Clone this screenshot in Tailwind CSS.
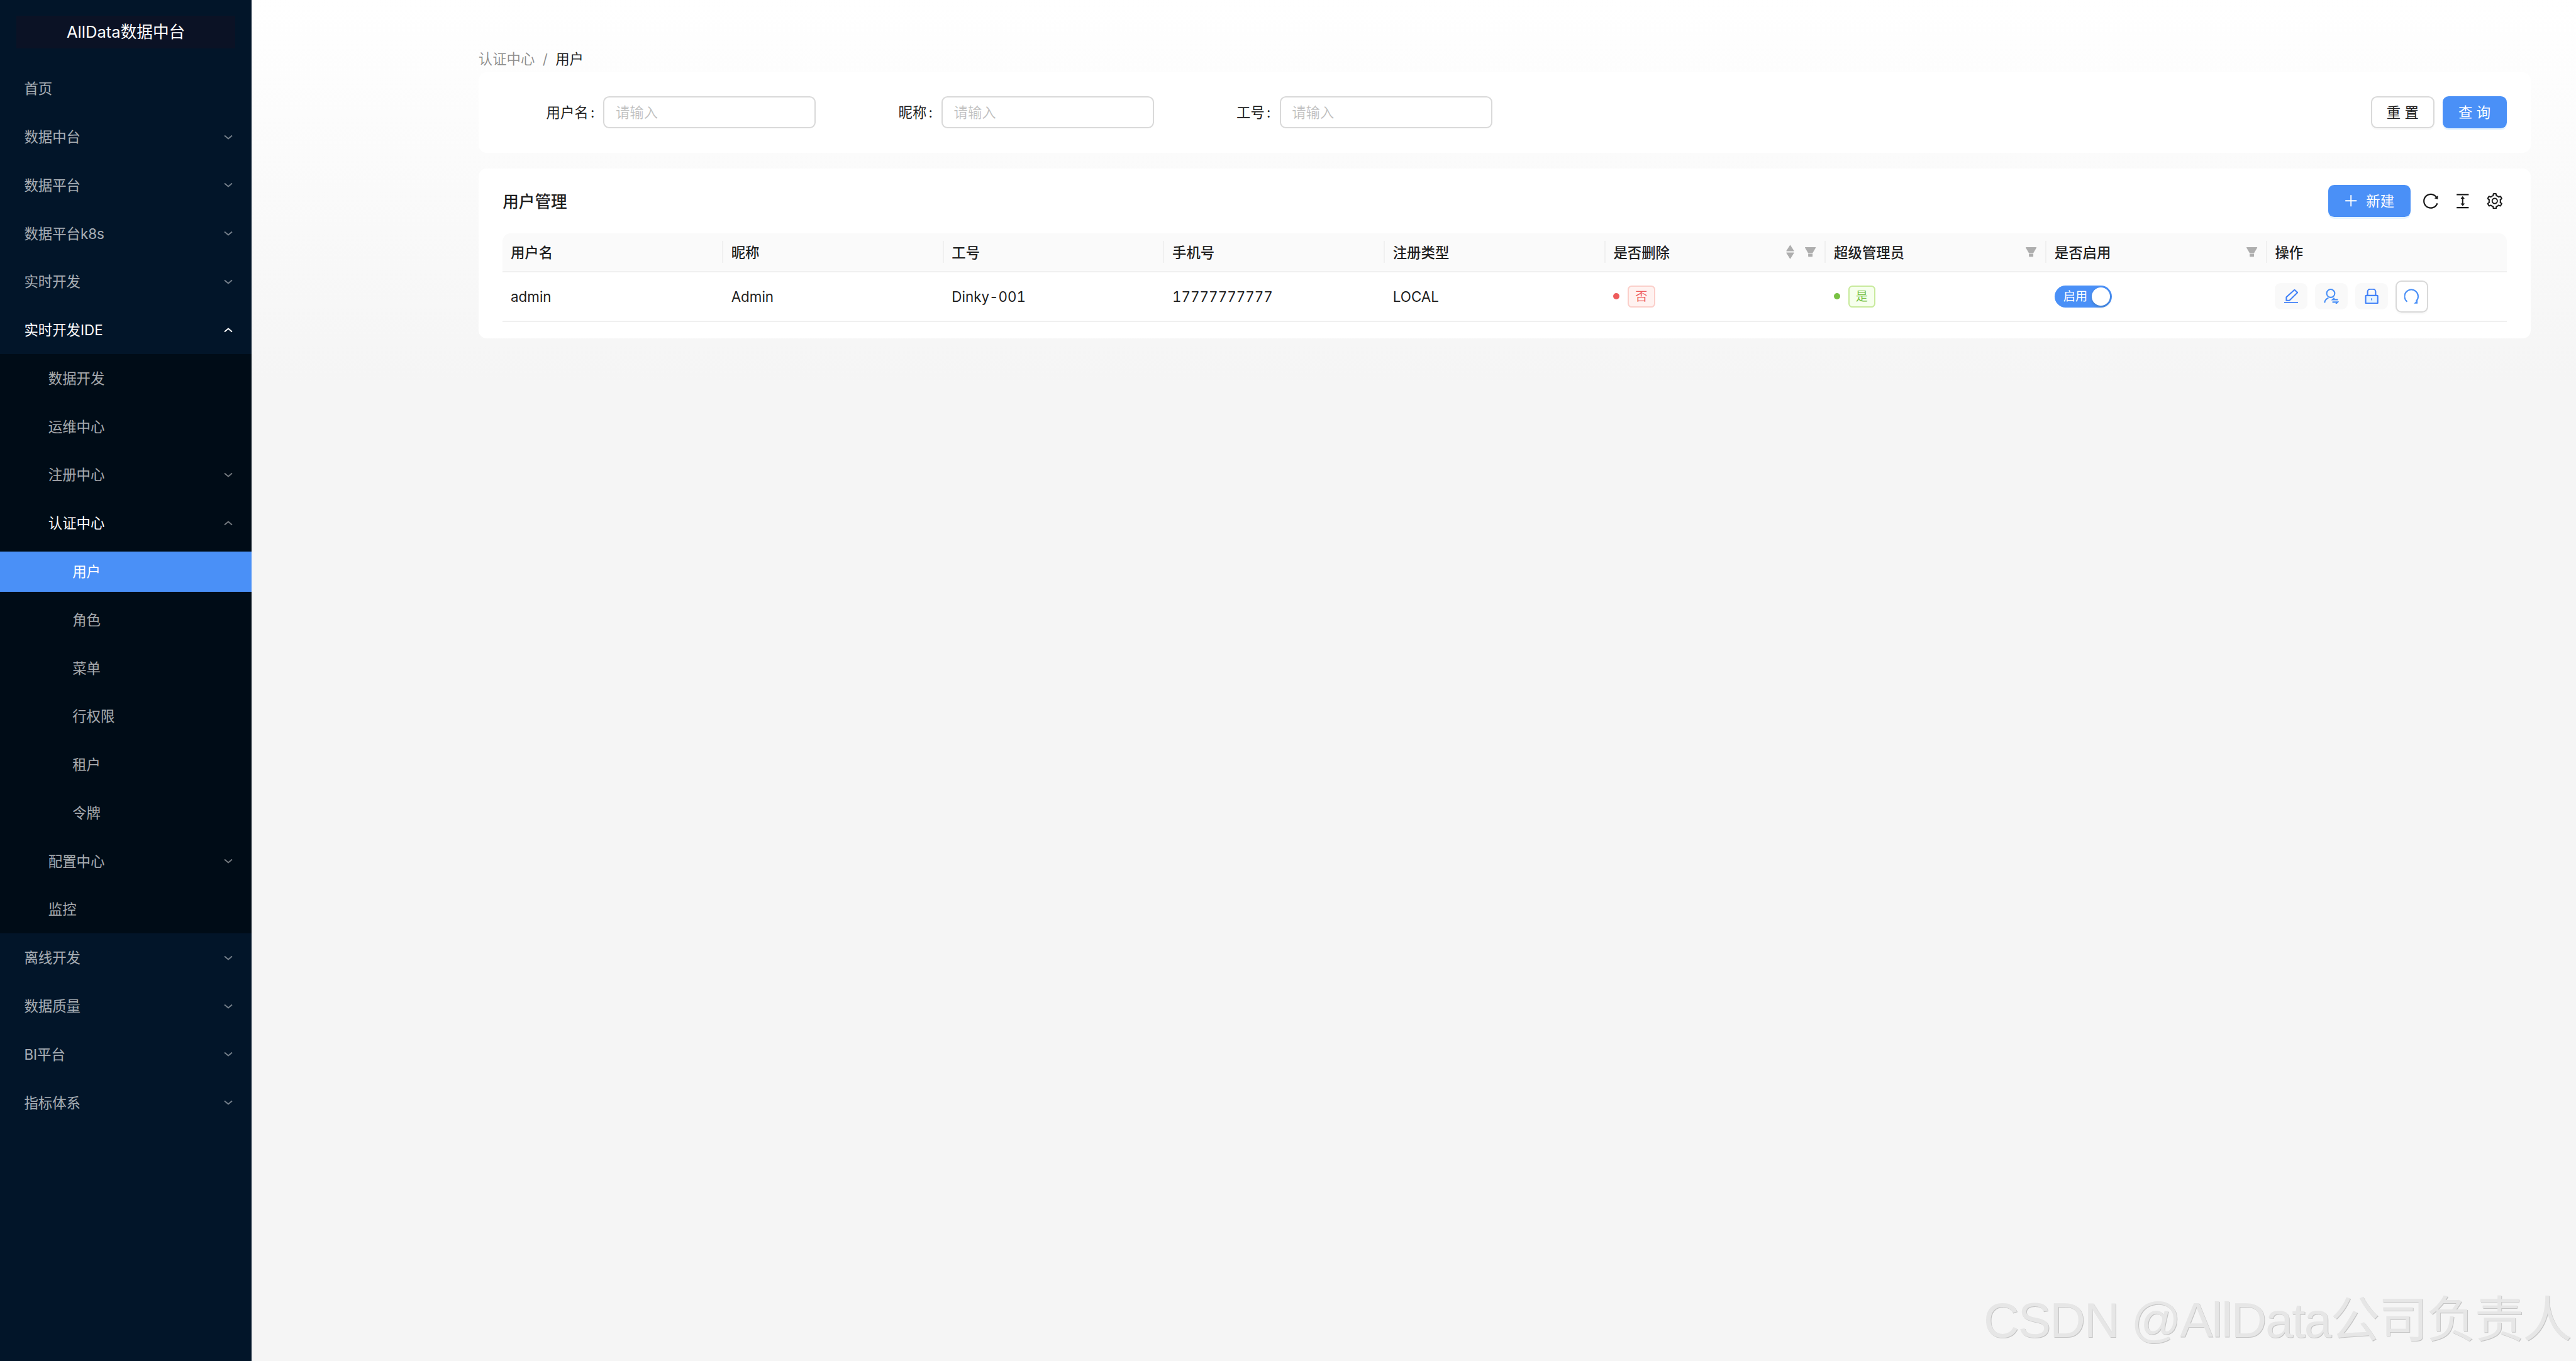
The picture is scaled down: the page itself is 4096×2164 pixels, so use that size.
<!DOCTYPE html>
<html lang="zh-CN">
<head>
    <meta charset="UTF-8">
    <title>用户 - AllData数据中台</title>
    <script src="https://cdn.jsdelivr.net/npm/@tailwindcss/browser@4"></script>
</head>
<body class="relative flex h-[2164px] w-[4096px] overflow-hidden bg-[#f5f5f5] font-['Inter','Noto_Sans_CJK_SC',sans-serif] text-[22.4px] leading-[35.2px] text-black/90">

    <!-- sidebar -->
    <aside class="w-[400px] shrink-0 bg-[#021529] text-white/65">
        <div class="h-[102.4px] px-[25.6px] pt-[25px]">
            <div class="h-[52px] bg-[#0b1225] text-center text-[25.6px] leading-[52px] text-white">AllData数据中台</div>
        </div>
        <nav class="flex flex-col">
            <a class="mx-0 my-[6.4px] flex h-[64px] items-center pl-[38.4px] pr-[30px]">首页</a>
            <a class="my-[6.4px] flex h-[64px] items-center justify-between pl-[38.4px] pr-[30px]">数据中台
                <svg class="h-[8px] w-[14px] text-white/45" viewBox="0 0 14 8" fill="none" stroke="currentColor" stroke-width="2"><path d="M1 1.5l6 5 6-5"/></svg></a>
            <a class="my-[6.4px] flex h-[64px] items-center justify-between pl-[38.4px] pr-[30px]">数据平台
                <svg class="h-[8px] w-[14px] text-white/45" viewBox="0 0 14 8" fill="none" stroke="currentColor" stroke-width="2"><path d="M1 1.5l6 5 6-5"/></svg></a>
            <a class="my-[6.4px] flex h-[64px] items-center justify-between pl-[38.4px] pr-[30px]">数据平台k8s
                <svg class="h-[8px] w-[14px] text-white/45" viewBox="0 0 14 8" fill="none" stroke="currentColor" stroke-width="2"><path d="M1 1.5l6 5 6-5"/></svg></a>
            <a class="my-[6.4px] flex h-[64px] items-center justify-between pl-[38.4px] pr-[30px]">实时开发
                <svg class="h-[8px] w-[14px] text-white/45" viewBox="0 0 14 8" fill="none" stroke="currentColor" stroke-width="2"><path d="M1 1.5l6 5 6-5"/></svg></a>
            <a class="my-[6.4px] flex h-[64px] items-center justify-between pl-[38.4px] pr-[30px] text-white">实时开发IDE
                <svg class="h-[8px] w-[14px]" viewBox="0 0 14 8" fill="none" stroke="currentColor" stroke-width="2"><path d="M1 6.5l6-5 6 5"/></svg></a>

            <div class="flex flex-col bg-[#000c17]">
                <a class="my-[6.4px] flex h-[64px] items-center pl-[76.8px] pr-[30px]">数据开发</a>
                <a class="my-[6.4px] flex h-[64px] items-center pl-[76.8px] pr-[30px]">运维中心</a>
                <a class="my-[6.4px] flex h-[64px] items-center justify-between pl-[76.8px] pr-[30px]">注册中心
                    <svg class="h-[8px] w-[14px] text-white/45" viewBox="0 0 14 8" fill="none" stroke="currentColor" stroke-width="2"><path d="M1 1.5l6 5 6-5"/></svg></a>
                <a class="my-[6.4px] flex h-[64px] items-center justify-between pl-[76.8px] pr-[30px] text-white">认证中心
                    <svg class="h-[8px] w-[14px] text-white/45" viewBox="0 0 14 8" fill="none" stroke="currentColor" stroke-width="2"><path d="M1 6.5l6-5 6 5"/></svg></a>
                <a class="my-[6.4px] flex h-[64px] items-center bg-[#4a90f7] pl-[115.2px] text-white">用户</a>
                <a class="my-[6.4px] flex h-[64px] items-center pl-[115.2px]">角色</a>
                <a class="my-[6.4px] flex h-[64px] items-center pl-[115.2px]">菜单</a>
                <a class="my-[6.4px] flex h-[64px] items-center pl-[115.2px]">行权限</a>
                <a class="my-[6.4px] flex h-[64px] items-center pl-[115.2px]">租户</a>
                <a class="my-[6.4px] flex h-[64px] items-center pl-[115.2px]">令牌</a>
                <a class="my-[6.4px] flex h-[64px] items-center justify-between pl-[76.8px] pr-[30px]">配置中心
                    <svg class="h-[8px] w-[14px] text-white/45" viewBox="0 0 14 8" fill="none" stroke="currentColor" stroke-width="2"><path d="M1 1.5l6 5 6-5"/></svg></a>
                <a class="my-[6.4px] flex h-[64px] items-center pl-[76.8px]">监控</a>
            </div>

            <a class="my-[6.4px] flex h-[64px] items-center justify-between pl-[38.4px] pr-[30px]">离线开发
                <svg class="h-[8px] w-[14px] text-white/45" viewBox="0 0 14 8" fill="none" stroke="currentColor" stroke-width="2"><path d="M1 1.5l6 5 6-5"/></svg></a>
            <a class="my-[6.4px] flex h-[64px] items-center justify-between pl-[38.4px] pr-[30px]">数据质量
                <svg class="h-[8px] w-[14px] text-white/45" viewBox="0 0 14 8" fill="none" stroke="currentColor" stroke-width="2"><path d="M1 1.5l6 5 6-5"/></svg></a>
            <a class="my-[6.4px] flex h-[64px] items-center justify-between pl-[38.4px] pr-[30px]">BI平台
                <svg class="h-[8px] w-[14px] text-white/45" viewBox="0 0 14 8" fill="none" stroke="currentColor" stroke-width="2"><path d="M1 1.5l6 5 6-5"/></svg></a>
            <a class="my-[6.4px] flex h-[64px] items-center justify-between pl-[38.4px] pr-[30px]">指标体系
                <svg class="h-[8px] w-[14px] text-white/45" viewBox="0 0 14 8" fill="none" stroke="currentColor" stroke-width="2"><path d="M1 1.5l6 5 6-5"/></svg></a>
        </nav>
    </aside>

    <!-- main -->
    <main class="flex-1 bg-[linear-gradient(#ffffff,#f5f5f5_28%)] pl-[360.8px] pr-[72px] pt-[75.7px]">
        <div class="mb-[3.7px] flex text-black/45">
            <span>认证中心</span><span class="mx-[12.4px]">/</span><span class="text-black/90">用户</span>
        </div>

        <!-- search form -->
        <section class="mb-[25.8px] flex h-[128.1px] items-center justify-between rounded-[12.8px] bg-white px-[38.4px]">
            <form class="flex gap-[39.4px]">
                <div class="flex items-center">
                    <label class="flex w-[160.2px] justify-end pr-[14px]">用户名<span class="ml-[3.2px]">:</span></label>
                    <input class="h-[51.2px] w-[338px] rounded-[9.6px] border-2 border-[#d9d9d9] bg-white px-[17.6px] placeholder:text-black/25" placeholder="请输入">
                </div>
                <div class="flex items-center">
                    <label class="flex w-[160.2px] justify-end pr-[14px]">昵称<span class="ml-[3.2px]">:</span></label>
                    <input class="h-[51.2px] w-[338px] rounded-[9.6px] border-2 border-[#d9d9d9] bg-white px-[17.6px] placeholder:text-black/25" placeholder="请输入">
                </div>
                <div class="flex items-center">
                    <label class="flex w-[160.2px] justify-end pr-[14px]">工号<span class="ml-[3.2px]">:</span></label>
                    <input class="h-[51.2px] w-[338px] rounded-[9.6px] border-2 border-[#d9d9d9] bg-white px-[17.6px] placeholder:text-black/25" placeholder="请输入">
                </div>
            </form>
            <div class="flex gap-[12.8px]">
                <button class="h-[51.2px] w-[101px] rounded-[9.6px] border-2 border-[#d9d9d9] bg-white shadow-[0_3px_0_rgba(0,0,0,0.02)]">重 置</button>
                <button class="h-[51.2px] w-[102px] rounded-[9.6px] bg-[#4a90f7] text-white shadow-[0_3px_0_rgba(5,145,255,0.1)]">查 询</button>
            </div>
        </section>

        <!-- user table -->
        <section class="h-[269.1px] rounded-[12.8px] bg-white px-[38.4px] pt-[25.6px]">
            <div class="mb-[25.6px] flex h-[51.2px] items-center justify-between">
                <h2 class="pt-px text-[25.6px] font-medium">用户管理</h2>
                <div class="flex items-center">
                    <button class="mr-[19px] flex h-[51.2px] w-[131px] items-center justify-center gap-[12.8px] rounded-[9.6px] bg-[#4a90f7] text-white shadow-[0_3px_0_rgba(5,145,255,0.1)]">
                        <svg class="size-[22.4px]" viewBox="64 64 896 896" fill="currentColor"><path d="M482 152h60q8 0 8 8v704q0 8-8 8h-60q-8 0-8-8V160q0-8 8-8z"/><path d="M192 474h672q8 0 8 8v60q0 8-8 8H160q-8 0-8-8v-60q0-8 8-8z"/></svg>
                        新建
                    </button>
                    <div class="mr-[6px] flex gap-[25.6px] text-black/90">
                        <svg class="size-[25.6px]" viewBox="64 64 896 896" fill="currentColor"><path d="M909.1 209.3l-56.4 44.1C775.8 155.1 656.2 92 521.9 92 290 92 102.3 279.5 102 511.5 101.7 743.7 289.8 932 521.9 932c181.3 0 335.8-115 394.6-276.1 1.5-4.2-.7-8.9-4.9-10.3l-56.7-19.5a8 8 0 00-10.1 4.8c-1.8 5-3.8 10-5.9 14.9-17.3 41-42.1 77.8-73.7 109.4A344.77 344.77 0 01655.9 829c-42.3 17.9-87.4 27-133.8 27-46.5 0-91.5-9.1-133.8-27A341.5 341.5 0 01279 755.2a342.16 342.16 0 01-73.7-109.4c-17.9-42.4-27-87.4-27-133.9s9.1-91.5 27-133.9c17.3-41 42.1-77.8 73.7-109.4 31.6-31.6 68.4-56.4 109.3-73.8 42.3-17.9 87.4-27 133.8-27 46.5 0 91.5 9.1 133.8 27a341.5 341.5 0 01109.3 73.8c9.9 9.9 19.2 20.4 27.8 31.4l-60.2 47a8 8 0 003 14.1l175.6 43c5 1.2 9.9-2.6 9.9-7.7l.8-180.9c-.1-6.6-7.8-10.3-13-6.2z"/></svg>
                        <svg class="size-[25.6px]" viewBox="64 64 896 896" fill="currentColor"><path d="M840 836H184c-4.4 0-8 3.6-8 8v60c0 4.4 3.6 8 8 8h656c4.4 0 8-3.6 8-8v-60c0-4.4-3.6-8-8-8zm0-724H184c-4.4 0-8 3.6-8 8v60c0 4.4 3.6 8 8 8h656c4.4 0 8-3.6 8-8v-60c0-4.4-3.6-8-8-8zM610.8 378c6 0 9.4-7 5.7-11.7L515.7 238.7a7.14 7.14 0 00-11.3 0L403.6 366.3a7.23 7.23 0 005.7 11.7H476v268h-62.8c-6 0-9.4 7-5.7 11.7l100.8 127.5c2.9 3.7 8.5 3.7 11.3 0l100.8-127.5c3.7-4.7.4-11.7-5.7-11.7H548V378h62.8z"/></svg>
                        <svg class="size-[25.6px]" viewBox="64 64 896 896" fill="currentColor"><path d="M924.8 625.7l-65.5-56c3.1-19 4.7-38.4 4.7-57.8s-1.6-38.8-4.7-57.8l65.5-56a32.03 32.03 0 009.3-35.2l-.9-2.6a443.74 443.74 0 00-79.7-137.9l-1.8-2.1a32.12 32.12 0 00-35.1-9.5l-81.3 28.9c-30-24.6-63.5-44-99.7-57.6l-15.7-85a32.05 32.05 0 00-25.8-25.7l-2.7-.5c-52.1-9.4-106.9-9.4-159 0l-2.7.5a32.05 32.05 0 00-25.8 25.7l-15.8 85.4a351.86 351.86 0 00-99 57.4l-81.9-29.1a32 32 0 00-35.1 9.5l-1.8 2.1a446.02 446.02 0 00-79.7 137.9l-.9 2.6c-4.5 12.5-.8 26.5 9.3 35.2l66.3 56.6c-3.1 18.8-4.6 38-4.6 57.1 0 19.2 1.5 38.4 4.6 57.1L99 625.5a32.03 32.03 0 00-9.3 35.2l.9 2.6c18.1 50.4 44.9 96.9 79.7 137.9l1.8 2.1a32.12 32.12 0 0035.1 9.5l81.9-29.1c29.8 24.5 63.1 43.9 99 57.4l15.8 85.4a32.05 32.05 0 0025.8 25.7l2.7.5a449.4 449.4 0 00159 0l2.7-.5a32.05 32.05 0 0025.8-25.7l15.7-85a350 350 0 0099.7-57.6l81.3 28.9a32 32 0 0035.1-9.5l1.8-2.1c34.8-41.1 61.6-87.5 79.7-137.9l.9-2.6c4.5-12.3.8-26.3-9.3-35zM788.3 465.9c2.5 15.1 3.8 30.6 3.8 46.1s-1.3 31-3.8 46.1l-6.6 40.1 74.7 63.9a370.03 370.03 0 01-42.6 73.6L721 702.8l-31.4 25.8c-23.9 19.6-50.5 35-79.3 45.8l-38.1 14.3-17.9 97a377.5 377.5 0 01-85 0l-17.9-97.2-37.8-14.5c-28.5-10.8-55-26.2-78.7-45.7l-31.4-25.9-93.4 33.2c-17-22.9-31.2-47.6-42.6-73.6l75.5-64.5-6.5-40c-2.4-14.9-3.7-30.3-3.7-45.5 0-15.3 1.2-30.6 3.7-45.5l6.5-40-75.5-64.5c11.3-26.1 25.6-50.7 42.6-73.6l93.4 33.2 31.4-25.9c23.7-19.5 50.2-34.9 78.7-45.7l37.9-14.3 17.9-97.2c28.1-3.2 56.8-3.2 85 0l17.9 97 38.1 14.3c28.7 10.8 55.4 26.2 79.3 45.8l31.4 25.8 92.8-32.9c17 22.9 31.2 47.6 42.6 73.6L781.8 426l6.5 39.9zM512 326c-97.2 0-176 78.8-176 176s78.8 176 176 176 176-78.8 176-176-78.8-176-176-176zm79.2 255.2A111.6 111.6 0 01512 614c-29.9 0-58-11.7-79.2-32.8A111.6 111.6 0 01400 502c0-29.9 11.7-58 32.8-79.2C454 401.6 482.1 390 512 390c29.9 0 58 11.6 79.2 32.8A111.6 111.6 0 01624 502c0 29.9-11.7 58-32.8 79.2z"/></svg>
                    </div>
                </div>
            </div>

            <!-- header row -->
            <div class="grid h-[62px] grid-cols-[repeat(8,350.7px)_1fr] rounded-t-[12.8px] border-b-2 border-[#f0f0f0] bg-[#fafafa] font-medium">
                <div class="flex items-center px-[12.8px]"><span class="flex-1 pt-px">用户名</span><i class="h-[35px] w-[2px] bg-[#f0f0f0] -mr-[12.8px]"></i></div>
                <div class="flex items-center px-[12.8px]"><span class="flex-1 pt-px">昵称</span><i class="h-[35px] w-[2px] bg-[#f0f0f0] -mr-[12.8px]"></i></div>
                <div class="flex items-center px-[12.8px]"><span class="flex-1 pt-px">工号</span><i class="h-[35px] w-[2px] bg-[#f0f0f0] -mr-[12.8px]"></i></div>
                <div class="flex items-center px-[12.8px]"><span class="flex-1 pt-px">手机号</span><i class="h-[35px] w-[2px] bg-[#f0f0f0] -mr-[12.8px]"></i></div>
                <div class="flex items-center px-[12.8px]"><span class="flex-1 pt-px">注册类型</span><i class="h-[35px] w-[2px] bg-[#f0f0f0] -mr-[12.8px]"></i></div>
                <div class="flex items-center px-[12.8px] text-black/30">
                    <span class="flex-1 pt-px text-black/90">是否删除</span>
                    <span class="mr-[16px] flex flex-col gap-[1px]">
                        <svg class="h-[11px] w-[13px]" viewBox="140 280 744 460" preserveAspectRatio="none" fill="currentColor"><path d="M858.9 689L530.5 308.2c-9.4-10.9-27.5-10.9-37 0L165.1 689c-12.2 14.2-1.2 35 18.5 35h656.8c19.7 0 30.7-20.8 18.5-35z"/></svg>
                        <svg class="h-[11px] w-[13px]" viewBox="140 280 744 460" preserveAspectRatio="none" fill="currentColor"><path d="M840.4 300H183.6c-19.7 0-30.7 20.8-18.5 35l328.4 380.8c9.4 10.9 27.5 10.9 37 0L858.9 335c12.2-14.2 1.2-35-18.5-35z"/></svg>
                    </span>
                    <svg class="mr-[12.8px] size-[19.2px]" viewBox="64 64 896 896" fill="currentColor"><path d="M349 838c0 17.7 14.2 32 31.8 32h262.4c17.6 0 31.8-14.3 31.8-32V642H349v196zm531.1-684H143.9c-24.5 0-39.8 26.7-27.5 48L349 597h326l232.7-395c12.4-21.3-2.9-48-27.6-48z"/></svg>
                    <i class="h-[35px] w-[2px] bg-[#f0f0f0] -mr-[12.8px]"></i>
                </div>
                <div class="flex items-center px-[12.8px] text-black/30">
                    <span class="flex-1 pt-px text-black/90">超级管理员</span>
                    <svg class="mr-[12.8px] size-[19.2px]" viewBox="64 64 896 896" fill="currentColor"><path d="M349 838c0 17.7 14.2 32 31.8 32h262.4c17.6 0 31.8-14.3 31.8-32V642H349v196zm531.1-684H143.9c-24.5 0-39.8 26.7-27.5 48L349 597h326l232.7-395c12.4-21.3-2.9-48-27.6-48z"/></svg>
                    <i class="h-[35px] w-[2px] bg-[#f0f0f0] -mr-[12.8px]"></i>
                </div>
                <div class="flex items-center px-[12.8px] text-black/30">
                    <span class="flex-1 pt-px text-black/90">是否启用</span>
                    <svg class="mr-[12.8px] size-[19.2px]" viewBox="64 64 896 896" fill="currentColor"><path d="M349 838c0 17.7 14.2 32 31.8 32h262.4c17.6 0 31.8-14.3 31.8-32V642H349v196zm531.1-684H143.9c-24.5 0-39.8 26.7-27.5 48L349 597h326l232.7-395c12.4-21.3-2.9-48-27.6-48z"/></svg>
                    <i class="h-[35px] w-[2px] bg-[#f0f0f0] -mr-[12.8px]"></i>
                </div>
                <div class="flex items-center px-[12.8px] pt-px">操作</div>
            </div>

            <!-- data row -->
            <div class="grid h-[78.7px] grid-cols-[repeat(8,350.7px)_1fr] items-center border-b-2 border-[#f0f0f0] tabular-nums">
                <div class="px-[12.8px]">admin</div>
                <div class="px-[12.8px]">Admin</div>
                <div class="px-[12.8px]">Dinky-001</div>
                <div class="px-[12.8px]">17777777777</div>
                <div class="px-[12.8px]">LOCAL</div>
                <div class="flex items-center gap-[13px] px-[12.8px]">
                    <i class="size-[9.6px] rounded-full bg-[#ee5c5c]"></i>
                    <span class="flex h-[35px] w-[43.5px] items-center justify-center rounded-[6.4px] border-2 border-[#fbcfca] bg-[#fff2f0] text-[19.2px] text-[#ee5c5c]">否</span>
                </div>
                <div class="flex items-center gap-[13px] px-[12.8px]">
                    <i class="size-[9.6px] rounded-full bg-[#78c143]"></i>
                    <span class="flex h-[35px] w-[43.5px] items-center justify-center rounded-[6.4px] border-2 border-[#c8ea9c] bg-[#f6ffed] text-[19.2px] text-[#78c143]">是</span>
                </div>
                <div class="px-[12.8px]">
                    <span class="flex h-[35.2px] w-[91.5px] items-center justify-between rounded-full bg-[#4a90f7] pl-[14px] pr-[3.2px] text-[19.2px] text-white">启用<i class="size-[28.8px] rounded-full bg-white shadow-[0_2px_4px_rgba(0,35,11,0.2)]"></i></span>
                </div>
                <div class="flex items-center gap-[12.8px] px-[12.8px]">
                    <button class="flex h-[41.6px] w-[51.2px] items-center justify-center rounded-[9.6px] bg-[#f9f9f9] text-[#4080f8]">
                        <svg class="size-[22.4px]" viewBox="0 0 28 28" fill="none" stroke="currentColor" stroke-width="2.6"><path d="M4.3 22.3v-6.6L20.5 1l6 5.5-16 15.8z"/><path d="M0 26.6h28"/></svg>
                    </button>
                    <button class="flex h-[41.6px] w-[51.2px] items-center justify-center rounded-[9.6px] bg-[#f9f9f9] text-[#4a90f7]">
                        <svg class="size-[24px]" viewBox="138 44 30 30" fill="none" stroke="currentColor" stroke-width="2.6"><circle cx="151.7" cy="53.3" r="8"/><path d="M139.6 72c.3-4.6 3.4-8 7.4-9.6"/><path d="M166 65.7h-10.5l3.5-3.4M155 70.7h10.5l-3.5 3.4"/></svg>
                    </button>
                    <button class="flex h-[41.6px] w-[51.2px] items-center justify-center rounded-[9.6px] bg-[#f9f9f9] text-[#4080f8]">
                        <svg class="size-[24px]" viewBox="217 45 30 30" fill="none" stroke="currentColor" stroke-width="2.6"><rect x="220.2" y="58.6" width="24" height="15.4" rx="1" fill="#e6f4ff"/><path d="M224 58.6v-7.6a5 5 0 015-5h6a5 5 0 015 5v7.6"/><path d="M232.2 64.2v4" stroke-width="2"/></svg>
                    </button>
                    <button class="flex h-[51.2px] w-[51.2px] items-center justify-center rounded-[9.6px] border-2 border-[#d9d9d9] bg-white text-[#4a90f7] shadow-[0_3px_0_rgba(0,0,0,0.02)]">
                        <svg class="size-[24px]" viewBox="297 44 30 30" fill="none" stroke="currentColor" stroke-width="2.6"><path d="M302.6 70A13.5 13.5 0 11320.5 69"/><path d="M316 73.6h7.4v-7.4z" fill="currentColor" stroke="none"/></svg>
                    </button>
                </div>
            </div>
        </section>
    </main>

    <!-- watermark -->
    <div class="absolute bottom-[16px] right-[8px] font-['Liberation_Sans','Noto_Sans_CJK_SC',sans-serif] text-[78.4px] leading-[98px] tracking-[-1.9px] text-[#e6e6e6] [text-shadow:1px_1px_0_#c4c4c4]">CSDN @AllData公司负责人</div>

</body>
</html>
